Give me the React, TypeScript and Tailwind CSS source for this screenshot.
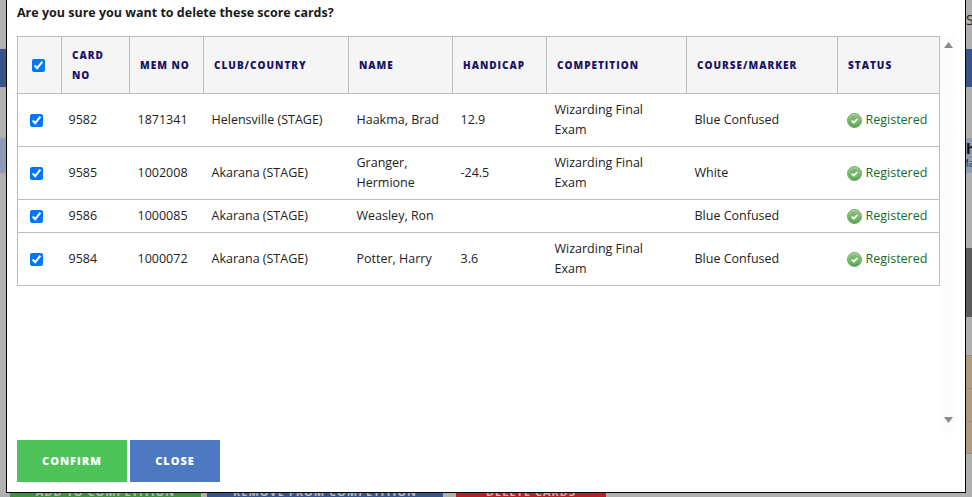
const font = "font-['Open_Sans',sans-serif]";

const rows = [
  { card: '9582', mem: '1871341', club: 'Helensville (STAGE)', name: 'Haakma, Brad', hcp: '12.9', comp: 'Wizarding Final Exam', course: 'Blue Confused' },
  { card: '9585', mem: '1002008', club: 'Akarana (STAGE)', name: 'Granger, Hermione', hcp: '-24.5', comp: 'Wizarding Final Exam', course: 'White' },
  { card: '9586', mem: '1000085', club: 'Akarana (STAGE)', name: 'Weasley, Ron', hcp: '', comp: '', course: 'Blue Confused' },
  { card: '9584', mem: '1000072', club: 'Akarana (STAGE)', name: 'Potter, Harry', hcp: '3.6', comp: 'Wizarding Final Exam', course: 'Blue Confused' },
];

const headers = [
  { label: 'CARD NO', w: 'w-[68px]' },
  { label: 'MEM NO', w: 'w-[74px]' },
  { label: 'CLUB/COUNTRY', w: 'w-[145px]' },
  { label: 'NAME', w: 'w-[104px]' },
  { label: 'HANDICAP', w: 'w-[94px]' },
  { label: 'COMPETITION', w: 'w-[140px]' },
  { label: 'COURSE/MARKER', w: 'w-[151px]' },
  { label: 'STATUS', w: 'w-[102px]' },
];

function StatusIcon() {
  return (
    <svg width="15" height="15" viewBox="0 0 15 15" className="shrink-0">
      <defs>
        <linearGradient id="statusFill" x1="0" y1="0" x2="0" y2="1">
          <stop offset="0" stopColor="#a5d69b" />
          <stop offset="1" stopColor="#4f9e46" />
        </linearGradient>
      </defs>
      <circle cx="7.5" cy="7.5" r="7" fill="url(#statusFill)" stroke="#76a86f" strokeWidth="1" />
      <circle cx="7.5" cy="7.5" r="4.6" fill="#74b968" />
      <path d="M4.8 7.6 L6.8 9.6 L10.4 5.8" fill="none" stroke="#ffffff" strokeWidth="1.7" />
    </svg>
  );
}

function Arrow({ down }: { down?: boolean }) {
  return (
    <svg width="9" height="6" viewBox="0 0 9 6" className="fill-[#8a8a8a]">
      <path d={down ? 'M0 0 H9 L4.5 6 Z' : 'M0 6 H9 L4.5 0 Z'} />
    </svg>
  );
}

function Check({ className }: { className: string }) {
  return <input type="checkbox" defaultChecked className={`block h-[13px] w-[13px] ${className}`} />;
}

// the page behind the dialog, only its edges show
function BackPage() {
  return (
    <div className={`flex h-full flex-col overflow-hidden text-[#222] ${font}`}>
      <div className="h-[49px] shrink-0 pl-[966px] pt-[11px] text-[14px] leading-[18px]">S</div>
      <div className="h-[38px] shrink-0 bg-[#365487]" />
      <div className="h-[51px] shrink-0" />
      <div className="h-[35px] shrink-0 bg-[#8f9bb5] pl-[966px] pt-[1px]">
        <div className="text-[15px] font-bold leading-[18px] text-[#111]">h</div>
        <div className="-ml-[6px] text-[10px] leading-[13px] text-[#333]">Ma</div>
      </div>
      <div className="ml-[966px] mt-[75px] h-[69px] shrink-0 bg-[#5c5c5c]" />
      <div className="ml-[966px] mt-[38px] shrink-0">
        <div className="h-[33px] border-t border-[#8e8e8e] bg-[#ae9a7d]" />
        <div className="h-[33px] border-t border-[#8e8e8e] bg-[#ae9a7d]" />
        <div className="h-[33px] border-y border-[#8e8e8e] bg-[#ae9a7d]" />
      </div>
      <div className="mt-[20px] flex h-[36px] shrink-0 text-[11px] font-bold tracking-[1px] text-[#b9b9b9]">
        <div className="ml-[10px] flex w-[191px] items-center justify-center bg-[#3e8f3e]">ADD TO COMPETITION</div>
        <div className="ml-[6px] flex w-[236px] items-center justify-center bg-[#365487]">REMOVE FROM COMPETITION</div>
        <div className="ml-[13px] flex w-[150px] items-center justify-center bg-[#b52222]">DELETE CARDS</div>
      </div>
    </div>
  );
}

function Dialog() {
  return (
    <div className={`absolute left-[6px] top-[-2px] flex h-[495px] w-[960px] flex-col border border-black bg-white pl-[10px] ${font}`}>
      <h2 className="pt-[4px] text-[12.5px] font-bold leading-[20px] text-[#1a1a1a]">
        Are you sure you want to delete these score cards?
      </h2>
      <div className="mt-[13px] flex h-[397px]">
        <table className="h-fit w-[923px] table-fixed border-collapse border border-[#bdbdbd] text-[12.5px] leading-[20px] text-[#222]">
          <thead>
            <tr className="bg-[#f5f5f5]">
              <th className="w-[44px] border border-[#bdbdbd] p-0 align-middle">
                <Check className="ml-[14px]" />
              </th>
              {headers.map((h) => (
                <th
                  key={h.label}
                  className={`${h.w} border border-[#bdbdbd] py-[8px] pl-[10px] pr-[8px] text-left align-middle text-[10px] font-extrabold leading-[20px] tracking-[1px] text-[#1b1464]`}
                >
                  {h.label}
                </th>
              ))}
            </tr>
          </thead>
          <tbody>
            {rows.map((r) => (
              <tr key={r.card} className="border-b border-[#bdbdbd]">
                <td className="py-[6px] pl-[12px]">
                  <Check className="" />
                </td>
                <td className="py-[6px] pl-[7px]">{r.card}</td>
                <td className="py-[6px] pl-[8px]">{r.mem}</td>
                <td className="py-[6px] pl-[8px]">{r.club}</td>
                <td className="py-[6px] pl-[8px] pr-[8px]">{r.name}</td>
                <td className="py-[6px] pl-[8px]">{r.hcp}</td>
                <td className="py-[6px] pl-[8px] pr-[24px]">{r.comp}</td>
                <td className="py-[6px] pl-[8px]">{r.course}</td>
                <td className="py-[6px] pl-[9px]">
                  <div className="flex items-center gap-[4px] text-[#146c2e]">
                    <StatusIcon />
                    Registered
                  </div>
                </td>
              </tr>
            ))}
          </tbody>
        </table>
        <div className="flex w-[16px] flex-col items-center justify-between bg-[#fcfcfc] pb-[10px] pt-[6px]">
          <Arrow />
          <Arrow down />
        </div>
      </div>
      <div className="mt-[7px] flex gap-[3px]">
        <button className="h-[42px] w-[110px] bg-[#4dc35a] text-[11px] font-extrabold tracking-[1px] text-white">
          CONFIRM
        </button>
        <button className="h-[42px] w-[90px] bg-[#4d78c2] text-[11px] font-extrabold tracking-[1px] text-white">
          CLOSE
        </button>
      </div>
    </div>
  );
}

export default function App() {
  return (
    <div className="relative h-[497px] w-[972px] overflow-hidden bg-[#b0b0b0]">
      <BackPage />
      <Dialog />
    </div>
  );
}
